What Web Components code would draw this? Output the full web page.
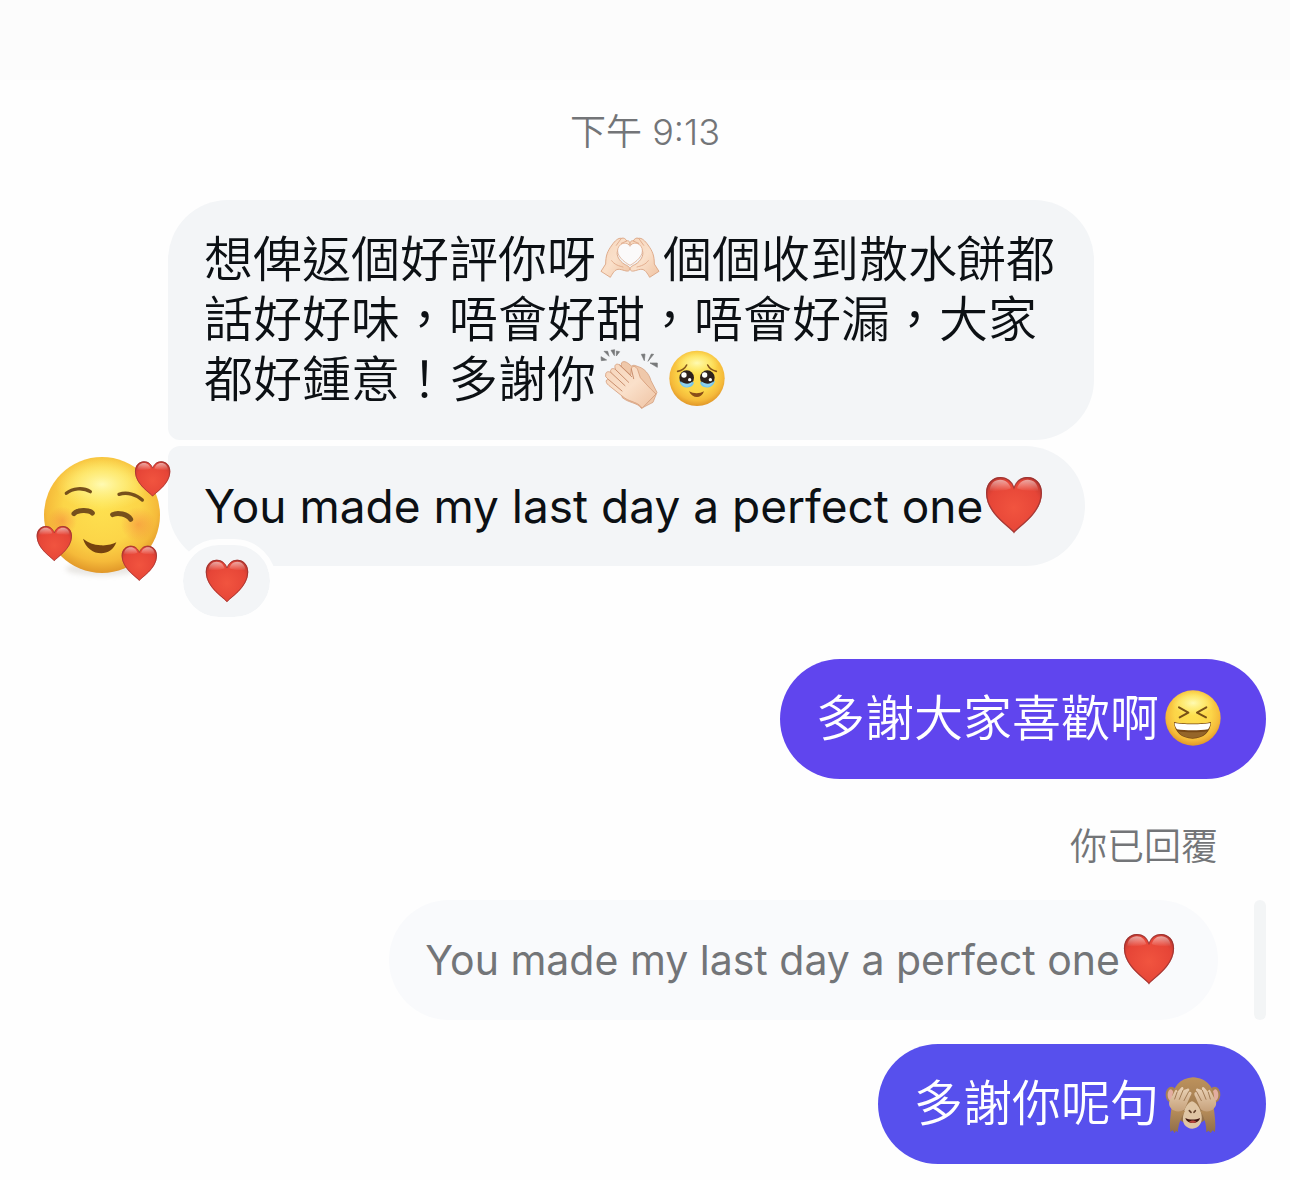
<!DOCTYPE html>
<html lang="zh-Hant">
<head>
<meta charset="UTF-8">
<meta name="viewport" content="width=device-width, initial-scale=1.0">
<title>Chat</title>
<style>
    body{
        margin: 0;
        background-color: #fefefe;
        font-family: Inter, "Noto Sans CJK TC", sans-serif;
        color: #0c1014;
    }
</style>
</head>
<body>
<chat-thread>
    <chat-time>下午 9:13</chat-time>
    <chat-group>
        <chat-emoji slot="avatar" name="hug"></chat-emoji>
        <chat-bubble class="first">想俾返個好評你呀<chat-emoji name="hands"></chat-emoji>個個收到散水餅都<wbr>話好好味，唔會好甜，唔會好漏，大家<wbr>都好鍾意！多謝你<chat-emoji name="clap"></chat-emoji><chat-emoji name="pleading"></chat-emoji></chat-bubble>
        <chat-bubble class="last latin">You made my last day a perfect one<chat-emoji name="heart"></chat-emoji><chat-reaction slot="reaction"></chat-reaction></chat-bubble>
    </chat-group>
    <chat-bubble class="mine">多謝大家喜歡啊<chat-emoji name="laugh"></chat-emoji></chat-bubble>
    <chat-reply>
        <span slot="label">你已回覆</span>
        <chat-bubble class="quote">You made my last day a perfect one<chat-emoji name="heart"></chat-emoji></chat-bubble>
    </chat-reply>
    <chat-bubble class="mine later">多謝你呢句<chat-emoji name="monkey"></chat-emoji></chat-bubble>
</chat-thread>

<script>
const heartPath = 'M84 168C77 154 0 112 0 48C0 18 20 0 43 0C64 0 78 14 84 31C90 14 104 0 125 0C148 0 168 18 168 48C168 112 91 154 84 168Z'

const heartDefs = `
    <radialGradient id="red" cx=".5" cy=".55" r=".62">
        <stop offset="0" stop-color="#f1543f"/><stop offset=".75" stop-color="#e64537"/><stop offset="1" stop-color="#c2382f"/>
    </radialGradient>
    <linearGradient id="shine" x1="0" y1="0" x2="0" y2="1">
        <stop offset="0" stop-color="#fff" stop-opacity=".55"/><stop offset="1" stop-color="#fff" stop-opacity="0"/>
    </linearGradient>`

const faceDefs = `
    <radialGradient id="face" cx=".5" cy=".42" r=".6">
        <stop offset="0" stop-color="#fee150"/><stop offset=".55" stop-color="#fcd548"/><stop offset=".8" stop-color="#f5ba3a"/><stop offset="1" stop-color="#dd9025"/>
    </radialGradient>
    <radialGradient id="top">
        <stop offset="0" stop-color="#fffcb8" stop-opacity=".95"/><stop offset=".5" stop-color="#fff68f" stop-opacity=".6"/><stop offset="1" stop-color="#fff27a" stop-opacity="0"/>
    </radialGradient>
    <radialGradient id="blush">
        <stop offset="0" stop-color="#f4743b" stop-opacity=".45"/><stop offset="1" stop-color="#f4743b" stop-opacity="0"/>
    </radialGradient>`

const skinDefs = `
    <linearGradient id="skin" x1="0" y1="0" x2="1" y2="1">
        <stop offset="0" stop-color="#f6d5bb"/><stop offset=".5" stop-color="#fae0ca"/><stop offset="1" stop-color="#efc3a3"/>
    </linearGradient>`

const heart = `
    <path d="${heartPath}" fill="url(#red)"/>
    <path d="${heartPath}" fill="none" stroke="#8e3334" stroke-opacity=".75" stroke-width="4" transform="translate(2 2) scale(.976)"/>
    <path d="M11 43C12 19 26 8 43 8C60 8 70 19 75 34C62 41 32 42 11 43ZM93 34C98 19 108 8 125 8C142 8 156 19 157 43C136 42 106 41 93 34Z" fill="url(#shine)"/>`

const emojis = {
    heart: {
        label: '❤️',
        box: '-3 -3 174 174',
        art: `<defs>${heartDefs}</defs>${heart}`
    },
    hug: {
        label: '🥰',
        box: '49 45 405 387',
        art: `<defs>${heartDefs}${faceDefs}</defs>
            <ellipse cx="247" cy="384" rx="110" ry="20" fill="#b9b2a8" opacity=".3" filter="blur(8px)"/>
            <circle cx="247" cy="222" r="174" fill="url(#face)"/>
            <ellipse cx="247" cy="130" rx="140" ry="80" fill="url(#top)"/>
            <circle cx="128" cy="240" r="44" fill="url(#blush)"/>
            <circle cx="355" cy="250" r="52" fill="url(#blush)"/>
            <g fill="none" stroke="#76501c" stroke-linecap="round">
                <path d="M140 157C158 142 190 138 212 152" stroke-width="10"/>
                <path d="M298 160C322 152 350 160 368 177" stroke-width="10"/>
                <path d="M163 218C174 206 208 206 218 216" stroke-width="15"/>
                <path d="M279 221C294 213 324 219 333 235" stroke-width="15"/>
            </g>
            <path d="M190 293C204 345 273 353 290 304C278 311 262 314 243 313C222 312 206 305 190 293Z" fill="#76430f"/>
            <g transform="translate(346 61) scale(.63)">${heart}</g>
            <g transform="translate(51 255) scale(.63)">${heart}</g>
            <g transform="translate(306 314) scale(.63)">${heart}</g>`
    },
    hands: {
        label: '🫶🏻',
        box: '30 15 174 174',
        art: `<defs>${skinDefs}</defs>
            <g fill="url(#skin)" stroke="#d99f7b" stroke-width="2.5" stroke-linejoin="round">
                <path d="M30 139L44 117C44 92 49 79 63 60C72 47 82 38 91 40C98 37 105 42 107 48C113 45 119 52 116 58C104 63 87 59 80 76C74 92 86 108 99 117C111 123 120 127 115 136C109 143 94 132 81 133C72 134 66 143 58 157Z"/>
                <path d="M204 139L190 117C190 92 185 79 171 60C162 47 152 38 143 40C136 37 129 42 127 48C121 45 115 52 118 58C130 63 147 59 154 76C160 92 148 108 135 117C123 123 114 127 119 136C125 143 140 132 153 133C162 134 168 143 176 157Z"/>
            </g>
            <path d="M117 64C110 50 88 51 81 70C74 91 99 111 117 121C135 111 160 91 153 70C146 51 124 50 117 64Z" fill="#fbfafa" stroke="#d99f7b" stroke-width="2"/>
            <path d="M91 40L76 61M107 48L91 55M143 40L158 61M127 48L143 55M62 107C70 119 84 123 96 126M172 107C164 119 150 123 138 126" fill="none" stroke="#dda584" stroke-width="2.5" stroke-linecap="round"/>`
    },
    clap: {
        label: '👏🏻',
        box: '30 372 174 174',
        art: `<defs>${skinDefs}</defs>
            <path d="M39 376L54 391L50 376ZM30 392L47 402L31 404ZM71 371L70 389L60 373ZM86 377L76 390L76 375ZM151 385L160 404L162 384ZM188 385L171 406L181 384ZM199 411L177 411L199 424Z" fill="#77797a" stroke="#77797a" stroke-width="2"/>
            <path d="M91 411C100 401 111 411 121 420C130 415 134 420 145 423C159 428 174 442 180 464L198 499L186 529L151 547C139 529 111 531 93 514Z" fill="#efc8aa" stroke="#cf946f" stroke-width="2"/>
            <path d="M44 446C44 436 54 435 60 440C55 429 66 424 74 431C67 416 77 411 86 417L119 447L121 429C123 416 136 421 140 431L148 455C158 466 175 486 195 504L153 547C144 529 119 528 102 517L53 478C43 470 43 459 53 461L44 452Z" fill="url(#skin)" stroke="#d59b78" stroke-width="2.5" stroke-linejoin="round"/>
            <path d="M60 440L102 479M74 431L113 469M86 417L122 452M53 461L93 495M121 429L128 458" fill="none" stroke="#c98e6d" stroke-width="3" stroke-linecap="round"/>`
    },
    pleading: {
        label: '🥹',
        box: '238 375 174 174',
        art: `<defs>${faceDefs}</defs>
            <circle cx="325" cy="460" r="83" fill="url(#face)"/>
            <ellipse cx="325" cy="414" rx="66" ry="36" fill="url(#top)"/>
            <path d="M267 439C278 437 289 430 294 420M357 420C362 430 373 437 383 439" fill="none" stroke="#85551b" stroke-width="5" stroke-linecap="round"/>
            <path d="M272 467C277 493 312 494 316 472ZM334 472C338 494 373 493 379 467Z" fill="#73c6ee"/>
            <circle cx="294" cy="458" r="22" fill="#2d211d"/>
            <circle cx="356" cy="458" r="22" fill="#2d211d"/>
            <path d="M276 469C287 478 303 479 312 469C307 490 281 491 276 469ZM338 469C349 478 365 479 374 469C369 490 343 491 338 469Z" fill="#8fd2ef"/>
            <g fill="#fff">
                <circle cx="286" cy="450" r="8"/><circle cx="303" cy="464" r="5"/>
                <circle cx="348" cy="450" r="8"/><circle cx="365" cy="464" r="5"/>
            </g>
            <path d="M301 499C311 522 339 522 346 499C333 507 315 507 301 499Z" fill="#894d19"/>`
    },
    laugh: {
        label: '😆',
        box: '71 55 174 174',
        art: `<defs>${faceDefs}</defs>
            <circle cx="158" cy="142" r="83" fill="url(#face)"/>
            <ellipse cx="158" cy="97" rx="66" ry="38" fill="url(#top)"/>
            <path d="M116 110L144 126L118 140M198 110L170 126L197 140" fill="none" stroke="#785016" stroke-width="6" stroke-linecap="round" stroke-linejoin="round"/>
            <path d="M101 154C120 160 194 160 212 154C211 184 190 203 157 204C124 203 102 184 101 154Z" fill="#774715"/>
            <path d="M103 157C125 162 189 162 210 157C210 165 207 171 203 176C178 180 135 180 110 176C106 171 103 165 103 157Z" fill="#fff"/>
            <path d="M113 182C132 186 181 186 200 182C190 196 175 202 157 202C138 202 122 196 113 182Z" fill="#956529"/>`
    },
    monkey: {
        label: '🙈',
        box: '73 101 174 174',
        art: `<defs>
                <linearGradient id="fur" x1="0" y1="0" x2="0" y2="1"><stop offset="0" stop-color="#bd925c"/><stop offset="1" stop-color="#8f6d49"/></linearGradient>
                <linearGradient id="palm" x1="0" y1="0" x2="0" y2="1"><stop offset="0" stop-color="#ead2b6"/><stop offset="1" stop-color="#c6a17b"/></linearGradient>
            </defs>
            <ellipse cx="95" cy="163" rx="17" ry="24" fill="#a68055"/>
            <ellipse cx="225" cy="163" rx="17" ry="24" fill="#a68055"/>
            <ellipse cx="93" cy="164" rx="9" ry="17" fill="#e3ada0"/>
            <ellipse cx="227" cy="164" rx="9" ry="17" fill="#e3ada0"/>
            <path d="M160 111C201 113 225 142 224 178C223 219 199 251 158 252C118 250 97 219 97 178C98 140 121 113 160 111Z" fill="url(#fur)"/>
            <path d="M132 220C135 201 147 185 157 183C169 185 182 204 185 221C191 248 177 264 158 265C138 264 124 248 132 220Z" fill="#dfc5a4"/>
            <path d="M96 199C92 225 89 249 92 275L99 270L105 278L109 271L114 276C117 248 126 228 136 213ZM222 199C225 225 229 249 226 275L219 270L213 278L207 271L200 276C200 248 193 228 182 213Z" fill="url(#fur)"/>
            <path d="M94 204C83 191 90 179 96 170L106 151C109 145 114 149 112 156L124 142C129 137 134 143 130 150L143 145C149 143 151 149 147 154L151 154C159 156 155 162 151 169L135 207C126 216 102 216 94 204ZM223 204C235 191 228 179 222 170L212 151C209 145 204 149 206 156L194 142C189 137 184 143 188 150L175 145C169 143 167 149 171 154C162 156 163 162 167 169L183 207C192 216 215 216 223 204Z" fill="url(#palm)"/>
            <path d="M112 156L105 176M130 150L119 177M147 154L133 181M206 156L212 176M188 150L199 177M171 154L185 181" fill="none" stroke="#a17b55" stroke-width="3" stroke-linecap="round"/>
            <path d="M149 211L154 216M167 211L163 216" stroke="#64432c" stroke-width="5" stroke-linecap="round"/>
            <path d="M137 233C150 239 167 239 181 233C177 253 142 253 137 233Z" fill="#3d150e"/>
            <path d="M148 245C154 239 165 239 171 245C165 249 154 249 148 245Z" fill="#b9473e"/>`
    }
}

class ChatEmoji extends HTMLElement{
    constructor(){
        super();
        this.attachShadow({mode:'open'})
    }
    connectedCallback(){
        const emoji = emojis[this.getAttribute('name')]
        this.shadowRoot.innerHTML=`
        <style>
        :host{
            display: inline-flex;
            justify-content: center;
            align-items: center;
            vertical-align: top;
            width: var(--emoji-box, 67px);
            height: 58px;
        }
        svg{
            flex: none;
            display: block;
            width: var(--emoji-size, 58px);
            overflow: visible;
        }
        </style>
        <svg viewBox="${emoji.box}" role="img" aria-label="${emoji.label}">${emoji.art}</svg>
        `
    }
}
customElements.define('chat-emoji',ChatEmoji);

class ChatReaction extends HTMLElement{
    constructor(){
        super();
        this.attachShadow({mode:'open'})
        this.shadowRoot.innerHTML=`
        <style>
        :host{
            --emoji-box: 44px;
            --emoji-size: 44px;
            display: block;
        }
        button{
            display: flex;
            justify-content: center;
            align-items: center;
            box-sizing: content-box;
            width: 87px;
            height: 72px;
            padding: 0;
            border: 6px solid #fefefe;
            border-radius: 42px;
            background-color: #f3f5f7;
            background-clip: padding-box;
        }
        </style>
        <button type="button"><chat-emoji name="heart"></chat-emoji></button>
        `
    }
}
customElements.define('chat-reaction',ChatReaction);

class ChatBubble extends HTMLElement{
    constructor(){
        super();
        this.attachShadow({mode:'open'})
        this.shadowRoot.innerHTML=`
        <style>
        :host{
            display: block;
            position: relative;
            box-sizing: border-box;
            width: fit-content;
            max-width: min(100%, 926px);
            padding: 30px 40px 30px 36px;
            border-radius: 60px;
            background-color: #f3f5f7;
            font-size: 49px;
            line-height: 60px;
        }
        :host(.first){
            padding-right: 36px;
            border-bottom-left-radius: 12px;
            font-weight: 350;
        }
        :host(.last){
            border-top-left-radius: 12px;
        }
        :host(.latin){
            --emoji-box: 62px;
            font-size: 46px;
        }
        :host(.mine){
            align-self: flex-end;
            background-color: #6045ee;
            color: #fff;
            font-weight: 350;
        }
        :host(.later){
            background-color: #5750ed;
        }
        :host(.quote){
            --emoji-box: 58px;
            --emoji-size: 52px;
            background-color: #f9fafc;
            color: #737578;
            font-size: 41px;
        }
        slot[name=reaction]{
            position: absolute;
            left: 9px;
            top: 93px;
            display: block;
        }
        </style>
        <slot></slot>
        <slot name="reaction"></slot>
        `
    }
}
customElements.define('chat-bubble',ChatBubble);

class ChatGroup extends HTMLElement{
    constructor(){
        super();
        this.attachShadow({mode:'open'})
        this.shadowRoot.innerHTML=`
        <style>
        :host{
            display: flex;
            align-items: flex-end;
            padding-left: 14px;
            margin-bottom: 93px;
        }
        .avatar{
            --emoji-box: 130px;
            --emoji-size: 135px;
            flex: none;
            z-index: 1;
            width: 130px;
            height: 75px;
        }
        .messages{
            flex: 1;
            min-width: 0;
            display: flex;
            flex-direction: column;
            gap: 6px;
        }
        </style>
        <div class="avatar"><slot name="avatar"></slot></div>
        <div class="messages"><slot></slot></div>
        `
    }
}
customElements.define('chat-group',ChatGroup);

class ChatReply extends HTMLElement{
    constructor(){
        super();
        this.attachShadow({mode:'open'})
        this.shadowRoot.innerHTML=`
        <style>
        :host{
            display: flex;
            flex-direction: column;
            align-items: flex-end;
            margin: 48px 0 24px;
        }
        .label{
            padding-right: 48px;
            margin-bottom: 33px;
            font-size: 37px;
            line-height: 40px;
            font-weight: 350;
            color: #737578;
        }
        .quoted{
            display: flex;
            justify-content: flex-end;
            gap: 36px;
            max-width: 100%;
        }
        .bar{
            flex: none;
            width: 12px;
            border-radius: 6px;
            background-color: #f3f5f6;
        }
        </style>
        <div class="label"><slot name="label"></slot></div>
        <div class="quoted">
            <slot></slot>
            <div class="bar"></div>
        </div>
        `
    }
}
customElements.define('chat-reply',ChatReply);

class ChatTime extends HTMLElement{
    constructor(){
        super();
        this.attachShadow({mode:'open'})
        this.shadowRoot.innerHTML=`
        <style>
        :host{
            display: block;
            margin: 32px 0 48px;
            text-align: center;
            font-size: 36px;
            line-height: 40px;
            font-weight: 350;
            color: #737578;
        }
        </style>
        <time datetime="21:13"><slot></slot></time>
        `
    }
}
customElements.define('chat-time',ChatTime);

class ChatThread extends HTMLElement{
    constructor(){
        super();
        this.attachShadow({mode:'open'})
        this.shadowRoot.innerHTML=`
        <style>
        :host{
            display: block;
        }
        header{
            height: 80px;
            background-color: #fcfcfc;
        }
        main{
            display: flex;
            flex-direction: column;
            padding: 0 24px 16px;
        }
        </style>
        <header></header>
        <main><slot></slot></main>
        `
    }
}
customElements.define('chat-thread',ChatThread);
</script>
</body>
</html>
